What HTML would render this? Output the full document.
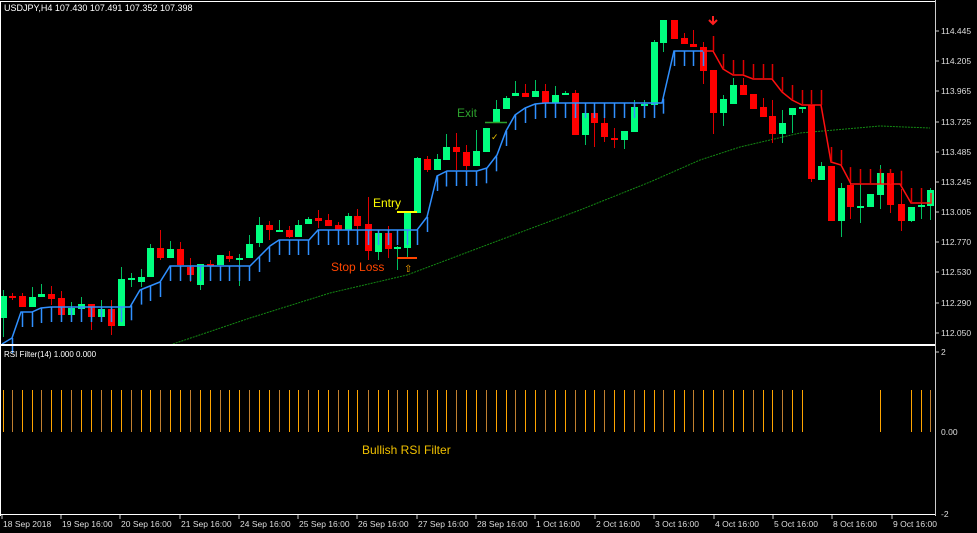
<!DOCTYPE html>
<html><head><meta charset="utf-8"><style>
html,body{margin:0;padding:0;background:#000;width:977px;height:533px;overflow:hidden}
svg{display:block}
text{font-family:"Liberation Sans",sans-serif}
</style></head><body>
<svg id="s" width="977" height="533" xmlns="http://www.w3.org/2000/svg">
<rect width="977" height="533" fill="#000"/>
<g id="g"></g>
<!-- frames -->
<line x1="0.5" y1="1" x2="0.5" y2="516" stroke="#fff"/>
<line x1="0" y1="1.5" x2="935" y2="1.5" stroke="#fff"/>
<line x1="0" y1="345" x2="935" y2="345" stroke="#fff" stroke-width="2"/>
<line x1="0" y1="514.5" x2="935" y2="514.5" stroke="#fff"/>
<line x1="935.5" y1="0" x2="935.5" y2="516" stroke="#ccc"/>
<text x="4" y="11" fill="#fff" font-size="9">USDJPY,H4  107.430 107.491 107.352 107.398</text>
<text x="4" y="357" fill="#fff" font-size="8">RSI Filter(14) 1.000 0.000</text>
<text x="373" y="207" fill="#ffff00" font-size="12">Entry</text>
<text x="457" y="117" fill="#2ca02c" font-size="12">Exit</text>
<text x="331" y="271" fill="#ff4500" font-size="12">Stop Loss</text>
<text x="362" y="454" fill="#f0c000" font-size="12">Bullish RSI Filter</text>
<line x1="397" y1="212" x2="417" y2="212" stroke="#ffff00" stroke-width="2"/>
<line x1="485" y1="122.5" x2="507" y2="122.5" stroke="#2ca02c" stroke-width="1.5"/>
<line x1="397" y1="258" x2="417" y2="258" stroke="#ff4500" stroke-width="2"/>
<text x="404" y="272" fill="#ffa500" font-size="10">⇧</text>
<text x="491" y="140" fill="#e8c000" font-size="9">✓</text>
<path d="M713 16 v7 M709 20 l4 4 l4 -4" stroke="#ff2020" stroke-width="2" fill="none"/>
</svg>
<script>
var g=document.getElementById('g'),h='';
function L(x1,y1,x2,y2,c,w,extra){h+='<line x1="'+x1+'" y1="'+y1+'" x2="'+x2+'" y2="'+y2+'" stroke="'+c+'" stroke-width="'+(w||1)+'" '+(extra||'')+'/>';}
function T(x,y,t,s,c){h+='<text x="'+x+'" y="'+y+'" fill="'+(c||'#fff')+'" font-size="'+s+'">'+t+'</text>';}
// MA
var ma=[[170,345],[250,318],[330,293],[407,275],[500,240],[580,210],[650,182],[700,160],[740,147],[800,133],[880,126],[930,128]];
h+='<polyline points="'+ma.map(p=>p.join(',')).join(' ')+'" fill="none" stroke="#138a13" stroke-width="1" stroke-dasharray="2,1"/>';
// candles: x, top, bottom, wickTop, wickBot, color(g/r)
var C=[[3,296,318,290,337,'g'],[12,296,298,293,300,'r'],[22,296,307,293,307,'r'],[32,297,307,287,307,'g'],[41,294,297,284,297,'g'],[51,294,299,286,305,'r'],[61,298,315,291,315,'r'],[71,308,315,302,320,'g'],[81,304,309,297,309,'g'],[91,304,317,304,330,'r'],[101,309,317,300,317,'g'],[111,309,326,300,335,'r'],[121,279,326,267,326,'g'],[131,278,280,273,287,'g'],[141,277,282,269,287,'g'],[150,248,277,244,277,'g'],[160,248,258,230,260,'r'],[170,249,258,241,258,'g'],[180,249,265,242,266,'r'],[190,267,275,258,282,'r'],[200,264,285,264,290,'g'],[210,264,266,260,266,'r'],[220,255,265,255,265,'g'],[229,256,259,251,262,'r'],[239,258,260,254,286,'g'],[249,244,258,235,258,'g'],[259,225,243,217,247,'g'],[269,225,230,221,240,'r'],[279,230,232,220,232,'g'],[289,230,237,226,238,'r'],[298,225,237,220,237,'g'],[308,219,224,217,224,'g'],[318,218,221,210,228,'r'],[328,220,226,214,226,'r'],[338,225,230,222,230,'r'],[348,216,230,213,230,'g'],[357,216,226,209,236,'r'],[368,224,251,197,260,'r'],[378,233,252,233,260,'g'],[388,233,249,226,258,'r'],[397,247,249,246,270,'g'],[407,213,248,213,258,'g'],[417,158,213,157,213,'g'],[427,159,170,156,172,'r'],[437,159,170,154,170,'g'],[446,147,160,134,160,'g'],[456,147,152,133,170,'r'],[466,152,166,145,170,'r'],[476,151,166,130,166,'g'],[486,128,152,128,152,'g'],[496,109,122,100,122,'g'],[506,98,109,96,109,'g'],[515,93,96,81,96,'g'],[525,93,97,84,97,'r'],[535,91,97,80,97,'g'],[545,91,103,84,104,'r'],[555,95,103,86,103,'g'],[565,93,95,91,95,'g'],[575,93,135,90,135,'r'],[585,113,135,113,145,'g'],[594,113,123,113,147,'r'],[604,123,137,117,142,'r'],[614,138,140,128,148,'r'],[624,131,140,131,149,'g'],[634,107,132,100,132,'g'],[644,104,106,100,106,'g'],[654,42,105,40,105,'g'],[663,20,43,20,52,'g'],[674,20,39,20,39,'r'],[684,38,44,33,44,'r'],[693,44,47,30,47,'r'],[703,47,71,42,84,'r'],[713,70,113,70,134,'r'],[723,99,113,95,126,'g'],[733,85,104,78,104,'g'],[743,85,95,78,95,'r'],[753,94,109,94,107,'r'],[763,107,117,98,117,'r'],[772,116,134,100,143,'r'],[782,123,134,110,143,'g'],[792,108,115,108,133,'g'],[802,107,109,107,113,'g'],[811,105,179,105,182,'r'],[821,166,180,162,180,'g'],[831,166,221,166,221,'r'],[841,188,221,183,237,'g'],[850,185,207,173,219,'r'],[860,206,208,171,223,'g'],[870,194,207,194,207,'g'],[880,173,195,165,209,'g'],[890,173,205,170,213,'r'],[901,204,221,189,231,'r'],[911,207,221,207,222,'g'],[921,205,207,189,219,'g'],[930,190,206,188,220,'g']];
C.forEach(c=>{var col=c[5]=='g'?'#00ff7f':'#ff0000',wc=c[5]=='g'?'#00c060':'#e00000';L(c[0]+.5,c[3],c[0]+.5,c[4],wc);var hgt=Math.max(c[2]-c[1],2);h+='<rect x="'+(c[0]-3)+'" y="'+c[1]+'" width="7" height="'+hgt+'" fill="'+col+'"/>';});
// blue line
var B=[[2,344],[12,338],[21,312],[32,312],[41,308],[51,307],[130,307],[140,290],[150,286],[160,282],[170,266],[250,266],[260,256],[270,246],[279,240],[309,240],[318,230],[417,230],[427,217],[437,176],[447,171],[477,171],[487,168],[497,155],[506,131],[515,115],[525,108],[535,104],[545,103],[662,103],[674,51],[703,51]];
h+='<polyline points="'+B.map(p=>p.join(',')).join(' ')+'" fill="none" stroke="#3090ff" stroke-width="1.5"/>';
function yAt(P,x){for(var i=0;i<P.length-1;i++){if(x>=P[i][0]&&x<=P[i+1][0]){var t=(x-P[i][0])/((P[i+1][0]-P[i][0])||1);return P[i][1]+t*(P[i+1][1]-P[i][1]);}}return null;}
C.forEach(c=>{if(c[0]<=703&&c[0]>=10){var y=yAt(B,c[0]);if(y!==null)L(c[0]+.5,y,c[0]+.5,y+15,'#3090ff',1.5);}});
// red line
var R=[[703,51],[713,51],[723,69],[733,75],[743,75],[753,79],[772,79],[782,92],[792,100],[802,105],[821,105],[831,162],[841,165],[851,184],[900,184],[911,203],[931,203],[931,193]];
h+='<polyline points="'+R.map(p=>p.join(',')).join(' ')+'" fill="none" stroke="#ff1010" stroke-width="1.5"/>';
C.forEach(c=>{if(c[0]>=713&&c[0]<=921){var y=yAt(R,c[0]);if(y!==null)L(c[0]+.5,y-15,c[0]+.5,y,'#e00000',1.5);}});
// price axis
[['114.445',31],['114.205',61],['113.965',91],['113.725',122],['113.485',152],['113.245',182],['113.005',212],['112.770',242],['112.530',272],['112.290',303],['112.050',333]].forEach(p=>{L(935,p[1],939,p[1],'#ccc');T(941,p[1]+3,p[0],8.5,'#ddd');});
L(935,352,939,352,'#ccc');T(941,355,'2',8.5,'#ddd');T(941,435,'0.00',8.5,'#ddd');T(941,517,'-2',8.5,'#ddd');
// RSI bars
C.forEach((c,i)=>{if(c[0]<=803||[880,911,921,930].indexOf(c[0])>=0){L(c[0]+.5,390,c[0]+.5,432,i%3==1?'#c08030':'#ffa500',1);}});
// dates
[['18 Sep 2018',2],['19 Sep 16:00',61],['20 Sep 16:00',120],['21 Sep 16:00',180],['24 Sep 16:00',239],['25 Sep 16:00',298],['26 Sep 16:00',357],['27 Sep 16:00',417],['28 Sep 16:00',476],['1 Oct 16:00',535],['2 Oct 16:00',595],['3 Oct 16:00',654],['4 Oct 16:00',714],['5 Oct 16:00',773],['8 Oct 16:00',832],['9 Oct 16:00',892]].forEach(d=>{L(d[1],515,d[1],519,'#ccc');T(d[1]+1,527,d[0],8.5,'#ddd');});
g.innerHTML=h;
</script>
</body></html>
